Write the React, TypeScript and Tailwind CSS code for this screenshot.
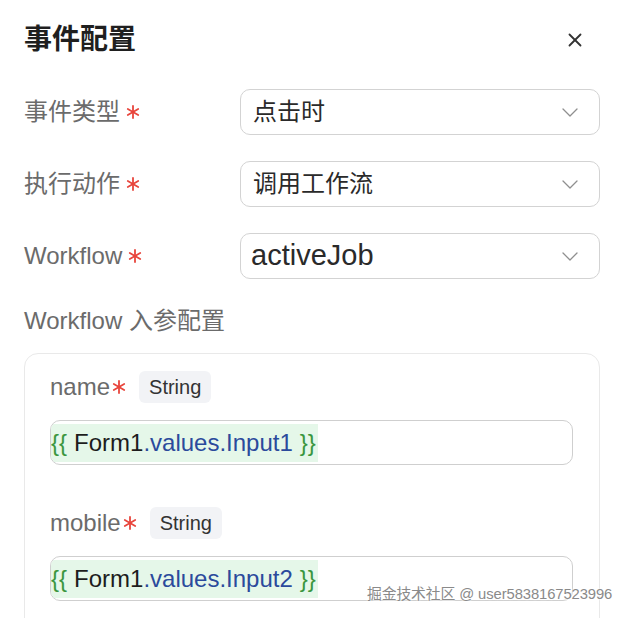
import { X } from "lucide-react";

const font = { fontFamily: '"Liberation Sans", "Noto Sans CJK SC", sans-serif' };

// red required mark, drawn as a six-point star
const Star = (props: any) => (
    <svg width="14" height="14" viewBox="0 0 14 14" className={props.className}>
        <g stroke="#e8453c" strokeWidth="1.8" strokeLinecap="round">
            <line x1="7" y1="1" x2="7" y2="13" />
            <line x1="1.8" y1="4" x2="12.2" y2="10" />
            <line x1="1.8" y1="10" x2="12.2" y2="4" />
        </g>
    </svg>
);

const Chevron = () => (
    <svg width="16" height="9" viewBox="0 0 16 9" className="shrink-0">
        <polyline points="1,1 8,8 15,1" fill="none" stroke="#8f8f8f" strokeWidth="1.3" strokeLinecap="round" strokeLinejoin="round" />
    </svg>
);

const SelectRow = (props: any) => {
    return <div className="flex items-center h-[46px]">
        <div className="w-[216px] flex items-center text-[24px] text-[#6b6b6b]">
            {props.label}<Star className="ml-[6px]" />
        </div>
        <div className="flex-1 h-full flex items-center justify-between border-[1.5px] border-[#d3d3d3] rounded-[10px] pl-[12px] pr-[21px]">
            <span className={props.big ? "text-[29px] text-[#2a2a2a] -ml-[2px]" : "text-[24px] text-[#2a2a2a]"}>{props.value}</span>
            <Chevron />
        </div>
    </div>
}

const Param = (props: any) => {
    return <div className="flex flex-col">
        <div className="flex items-center h-[32px]">
            <span className="text-[24px] text-[#6b6b6b]">{props.name}</span>
            <Star className="ml-[2px]" />
            <span className="ml-[13px] h-[32px] flex items-center px-[10px] rounded-[6px] bg-[#f2f3f6] text-[20px] text-[#333]">String</span>
        </div>
        <div className="mt-[17px] h-[45px] flex items-center border-[1.5px] border-[#cfcfcf] rounded-[10px] overflow-hidden">
            <span className="h-[38px] flex items-center bg-[#e5f7e9] text-[24px] pr-[2px]">
                <span className="text-[#3b963f]">{"{{"}</span>
                <span className="text-[#1d1d1d] ml-[7px]">Form1</span>
                <span className="text-[#2b4a9c]">.values.{props.input}</span>
                <span className="text-[#3b963f] ml-[7px]">{"}}"}</span>
            </span>
        </div>
    </div>
}

export default function App() {
    return <div className="relative w-[626px] h-[618px] bg-white overflow-hidden pt-[24px] pl-[24px] pr-[26px]" style={font}>
        <div className="flex items-center justify-between h-[32px] pr-[14px]">
            <span className="text-[28px] font-bold text-[#1f1f1f]">事件配置</span>
            <X size={22} strokeWidth={2} className="text-[#333]" />
        </div>

        <div className="mt-[33px] flex flex-col gap-[26px]">
            <SelectRow label="事件类型" value="点击时" />
            <SelectRow label="执行动作" value="调用工作流" />
            <SelectRow label="Workflow" value="activeJob" big />
        </div>

        <div className="mt-[27px] h-[30px] flex items-center text-[24px] text-[#6b6b6b]">Workflow 入参配置</div>

        <div className="mt-[17px] border-[1.5px] border-[#e9e9e9] rounded-[14px] pt-[17px] pl-[25px] pr-[26px] pb-[30px] flex flex-col gap-[42px]">
            <Param name="name" input="Input1" />
            <Param name="mobile" input="Input2" />
        </div>

        <div className="absolute left-[367px] top-[583px] text-[14.8px] tracking-[-0.1px] text-[#8a8a8a] [text-shadow:0_0_2px_#fff,0_0_2px_#fff]">
            掘金技术社区 @ user5838167523996
        </div>
    </div>
}
